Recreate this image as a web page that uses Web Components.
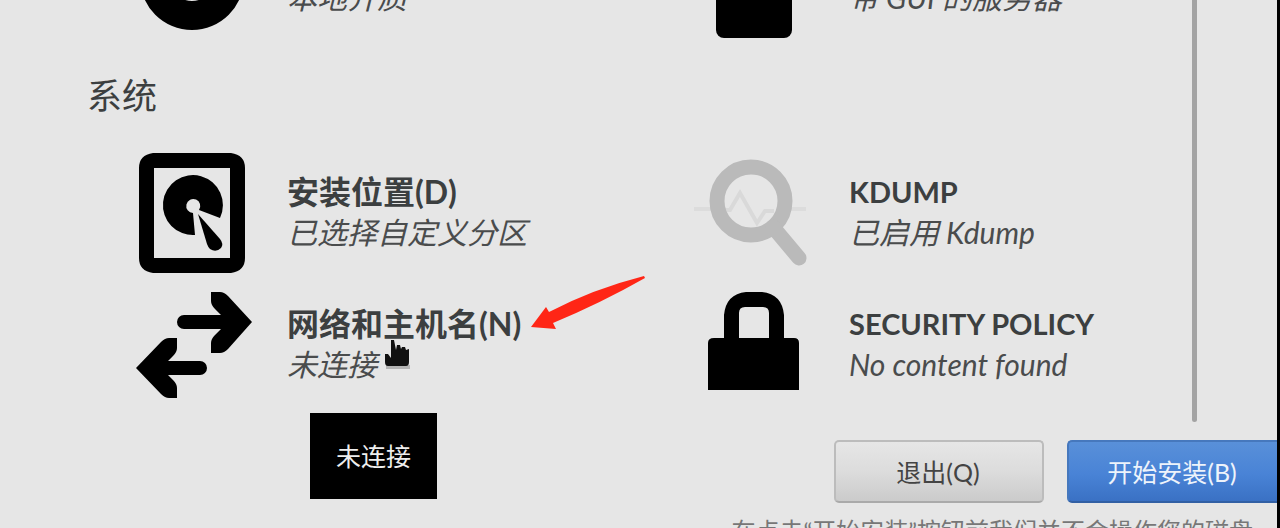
<!DOCTYPE html>
<html lang="zh-CN">
<head>
<meta charset="utf-8">
<title>安装信息摘要</title>
<style>
html, body { margin: 0; height: 100%; }
body { background: #e6e6e6; overflow: hidden; }
</style>
</head>
<body>
<installer-hub>
  <spoke-grid>
    <spoke-item>
      <spoke-icon name="disc" slot="icon"></spoke-icon>
      <span slot="title">安装源(I)</span><span slot="status">本地介质</span>
    </spoke-item>
    <spoke-item>
      <spoke-icon name="package" slot="icon"></spoke-icon>
      <span slot="title">软件选择(S)</span><span slot="status">带 GUI 的服务器</span>
    </spoke-item>
  </spoke-grid>
  <category-heading>系统</category-heading>
  <spoke-grid>
    <spoke-item>
      <spoke-icon name="drive" slot="icon"></spoke-icon>
      <span slot="title">安装位置(D)</span><span slot="status">已选择自定义分区</span>
    </spoke-item>
    <spoke-item latin>
      <spoke-icon name="kdump" slot="icon"></spoke-icon>
      <span slot="title">KDUMP</span><span slot="status">已启用 Kdump</span>
    </spoke-item>
    <spoke-item>
      <spoke-icon name="network" slot="icon"></spoke-icon>
      <span slot="title">网络和主机名(N)</span><span slot="status">未连接</span>
      <pointer-mark slot="overlay"></pointer-mark>
      <red-arrow slot="overlay"></red-arrow>
      <hover-tip slot="overlay">未连接</hover-tip>
    </spoke-item>
    <spoke-item latin>
      <spoke-icon name="lock" slot="icon"></spoke-icon>
      <span slot="title">SECURITY POLICY</span><span slot="status">No content found</span>
    </spoke-item>
  </spoke-grid>
  <action-button slot="actions">退出(Q)</action-button>
  <action-button slot="actions" kind="primary">开始安装(B)</action-button>
  <span slot="note">在点击“开始安装”按钮前我们并不会操作您的磁盘。</span>
</installer-hub>
<script>
const define = (name, html, setup) => {
  const template = document.createElement('template');
  template.innerHTML = html;
  customElements.define(name, class extends HTMLElement {
    connectedCallback() {
      if (this.shadowRoot) return;
      const root = this.attachShadow({ mode: 'open' });
      root.append(template.content.cloneNode(true));
      if (setup) setup(this, root);
    }
  });
};

define('installer-hub', `
<style>
:host { display: flex; flex-direction: column; height: 100vh; box-sizing: border-box; overflow: hidden;
  background: #e6e6e6; border-right: 3px solid #000; color: #3c3f40;
  font-family: Lato, "Noto Sans CJK SC", sans-serif; }
.scroller { flex: 1; min-height: 0; display: flex; margin-right: 80px; }
main { flex: 1; min-width: 0; display: flex; flex-direction: column; justify-content: flex-end; padding-bottom: 17px; }
.bar { width: 5px; background: #a3a3a3; border-radius: 0 0 3px 3px; }
footer { margin-top: 18px; }
.actions { display: flex; justify-content: flex-end; gap: 23px; }
p { margin: 13px 0 -18px; text-align: right; font-size: 24px; line-height: 30px; color: #777; white-space: nowrap; }
</style>
<div class="scroller"><main><slot></slot></main><div class="bar"></div></div>
<footer><div class="actions"><slot name="actions"></slot></div><p><slot name="note"></slot></p></footer>`);

define('category-heading', `
<style>
:host { display: block; flex: none; padding-left: 87px; }
h2 { margin: 32px 0; font-size: 35px; line-height: 51px; font-weight: 400; }
</style><h2><slot></slot></h2>`);

define('spoke-grid', `
<style>
:host { display: grid; flex: none; grid-template-columns: 1fr 1fr; gap: 12px 64px; padding-left: 132px; }
</style><slot></slot>`);

define('spoke-item', `
<style>
:host { display: flex; align-items: center; gap: 35px; position: relative; height: 120px; min-width: 0; white-space: nowrap; }
.text { padding-bottom: 2px; }
.title { font-size: 32px; line-height: 40px; font-weight: 700; }
:host([latin]) .title { font-size: 29px; }
.status { font-size: 30px; line-height: 40px; font-style: italic; color: #4a4c4d; }
</style>
<slot name="icon"></slot>
<div class="text"><div class="title"><slot name="title"></slot></div><div class="status"><slot name="status"></slot></div></div>
<slot name="overlay"></slot>`);

const icons = {
  disc: '<path fill-rule="evenodd" d="M60 8a52 52 0 1 0 0 104a52 52 0 1 0 0-104zM60 37a23 23 0 1 1 0 46a23 23 0 1 1 0-46z"/>',
  package: '<rect x="22" y="4" width="76" height="116" rx="8"/>',
  drive: '<path fill-rule="evenodd" d="M21 0H99Q113 2 113 15V105Q113 118 99 120H21Q7 118 7 105V15Q7 2 21 0zM22 15V105H98V15z"/><path fill-rule="evenodd" d="M63 82A30 30 0 1 1 88 65L67 57A7 7 0 1 0 61 60z"/><path d="M66 61L88 86Q92 91 89 95Q84 100 78 96Q76 94 75 91z"/>',
  network: '<path d="M79 7h9q4 0 8 4l24 26-24 27q-4 4-8 4h-9v-10q0-4 4-8l6-6H52a7 7 0 0 1 0-14h37l-6-6q-4-4-4-8z"/><path d="M45 53h-8q-4 0-8 4L4 83l25 26q4 4 8 4h8v-10q0-4-4-8l-5-5h32a7 7 0 0 0 0-14H36l5-5q4-4 4-8z"/>',
  kdump: '<path d="M0 56H18M96 56H112" fill="none" stroke="#dcdcdc" stroke-width="4"/><path d="M30 57H36L46 40 63 70 71 58H80" fill="none" stroke="#d9d9d9" stroke-width="4"/><circle cx="57" cy="48" r="34" fill="none" stroke="#bababa" stroke-width="15"/><path d="M79 74L105 105" stroke="#bababa" stroke-width="15" stroke-linecap="round"/>',
  lock: '<path fill-rule="evenodd" d="M14 58Q14 53 20 53H30V30Q32 9 52 7H68Q88 9 90 30V53H100Q105 53 105 58V105H14zM45 53H75V28Q75 22 69 22H51Q45 22 45 28z"/>'
};
define('spoke-icon', `
<style>:host { display: block; flex: none; width: 120px; height: 120px; } svg { display: block; width: 100%; height: 100%; overflow: visible; }</style>
<svg viewBox="0 0 120 120" aria-hidden="true"></svg>`,
  (host, root) => { root.querySelector('svg').innerHTML = icons[host.getAttribute('name')]; });

define('pointer-mark', `
<style>:host { position: absolute; left: 250px; top: 50px; width: 32px; height: 36px; } svg { display: block; }</style>
<svg width="32" height="36" viewBox="0 0 32 36" aria-hidden="true"><path d="M4 34H28V30H4z" fill="#b4b4b4"/><path d="M9 5H12L14 15 15 10H18L19 14 20 12H23L24 15 27 14V27Q27 31 24 31H6Q3 31 3 27V19H6L9 23z" fill="#111"/></svg>`);

define('red-arrow', `
<style>:host { position: absolute; left: 399px; top: -9px; width: 116px; height: 56px; } svg { display: block; }</style>
<svg width="116" height="56" viewBox="0 0 116 56" aria-hidden="true"><path d="M0 51L15 31 18 36Q62 13 113 0L114 2Q70 27 22 47L25 53z" fill="#ff2616"/></svg>`);

define('hover-tip', `
<style>:host { position: absolute; left: 178px; top: 128px; box-sizing: border-box; padding: 25px 26px; background: #000; color: #eee; font-size: 25px; line-height: 36px; }</style>
<slot></slot>`);

define('action-button', `
<style>
:host { display: block; }
button { display: block; box-sizing: border-box; width: 210px; height: 63px; padding: 0 2px 2px 0; font: inherit; font-size: 25px;
  color: #444; border: 2px solid #bcbcbc; border-bottom-color: #aaa; border-radius: 5px; background: linear-gradient(#e6e6e6, #dcdcdc 50%, #cbcbcb); }
:host([kind="primary"]) button { color: #edf3fb; border-color: #4678bd; border-bottom-color: #3260a4; border-right: 0; border-radius: 5px 0 0 5px;
  background: linear-gradient(#5990d9, #4983d6 55%, #3a71c4); }
</style>
<button type="button"><slot></slot></button>`);
</script>
</body>
</html>
